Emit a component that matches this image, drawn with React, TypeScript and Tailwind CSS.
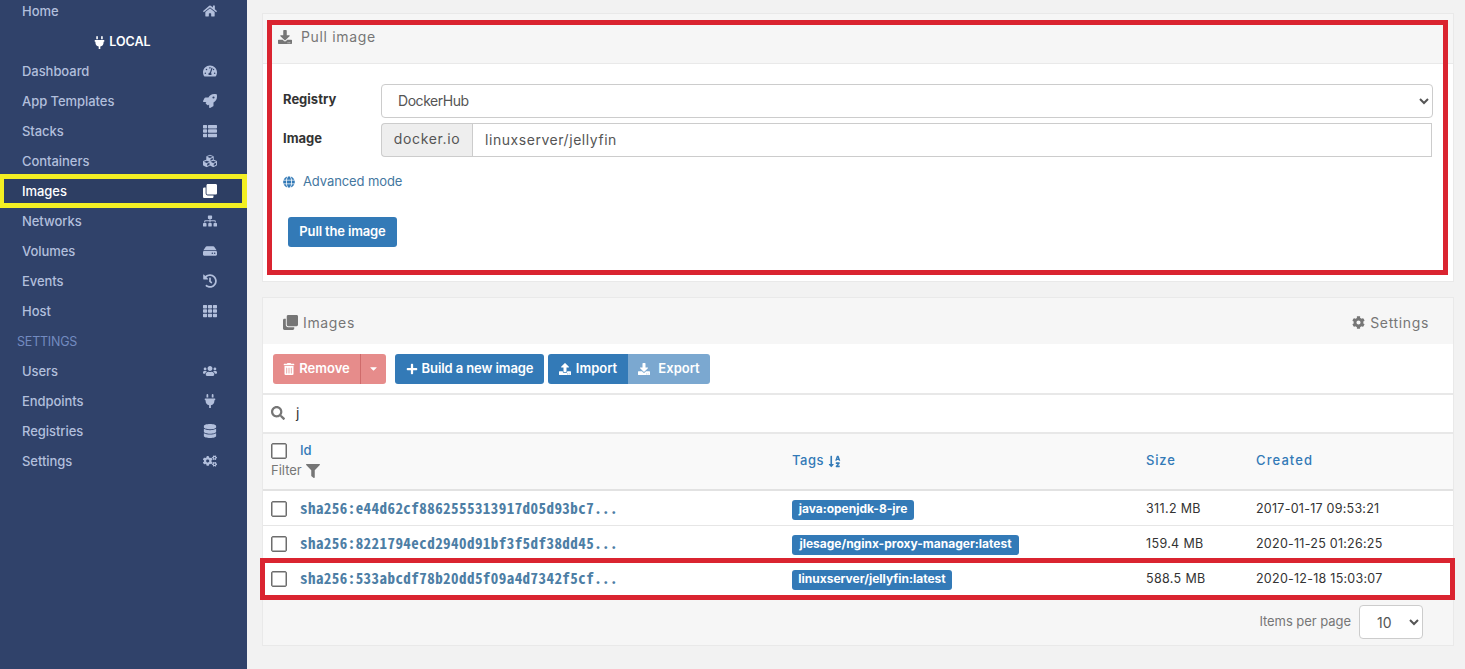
import type { ReactNode } from "react"
import type { IconType } from "react-icons"
import {
  FaCaretDown,
  FaClone,
  FaCog,
  FaCogs,
  FaCubes,
  FaDatabase,
  FaDownload,
  FaFilter,
  FaGlobe,
  FaHdd,
  FaHistory,
  FaHome,
  FaPlug,
  FaPlus,
  FaRocket,
  FaSearch,
  FaSitemap,
  FaSortAlphaDown,
  FaTachometerAlt,
  FaTh,
  FaThList,
  FaTrashAlt,
  FaUpload,
  FaUsers,
} from "react-icons/fa"

interface NavItem {
  label: string
  icon: IconType
  active?: boolean
}

const localNav: NavItem[] = [
  { label: "Dashboard", icon: FaTachometerAlt },
  { label: "App Templates", icon: FaRocket },
  { label: "Stacks", icon: FaThList },
  { label: "Containers", icon: FaCubes },
  { label: "Images", icon: FaClone, active: true },
  { label: "Networks", icon: FaSitemap },
  { label: "Volumes", icon: FaHdd },
  { label: "Events", icon: FaHistory },
  { label: "Host", icon: FaTh },
]

const settingsNav: NavItem[] = [
  { label: "Users", icon: FaUsers },
  { label: "Endpoints", icon: FaPlug },
  { label: "Registries", icon: FaDatabase },
  { label: "Settings", icon: FaCogs },
]

const images = [
  { id: "sha256:e44d62cf8862555313917d05d93bc7...", tag: "java:openjdk-8-jre", size: "311.2 MB", created: "2017-01-17 09:53:21", tagWidth: "w-[122px]" },
  { id: "sha256:8221794ecd2940d91bf3f5df38dd45...", tag: "jlesage/nginx-proxy-manager:latest", size: "159.4 MB", created: "2020-11-25 01:26:25", tagWidth: "w-[227px]" },
  { id: "sha256:533abcdf78b20dd5f09a4d7342f5cf...", tag: "linuxserver/jellyfin:latest", size: "588.5 MB", created: "2020-12-18 15:03:07", tagWidth: "w-[160px]", marked: true },
]

function NavRow({ label, icon: Icon, active }: NavItem) {
  return (
    <div className={`relative flex h-[30px] items-center pl-[22px] text-[13px] font-medium ${active ? "bg-[#2d3e63] text-white" : "text-[#b2bfdc]"}`}>
      <span className="w-[178px] pt-[2px] tracking-[-0.05px]">{label}</span>
      <span className="flex w-5 justify-center pb-px">
        <Icon size={14} />
      </span>
      {active && <div className="absolute inset-x-0 -inset-y-[2px] border-[5px] border-l-4 border-[#f3ef23]" />}
    </div>
  )
}

function Checkbox() {
  return <input type="checkbox" className="block h-4 w-4 shrink-0 appearance-none rounded-[2px] border-[1.5px] border-[#6d6d6d] bg-white ring-[0.5px] ring-inset ring-[#6d6d6d]" />
}

function Button({ className, children }: { className: string; children: ReactNode }) {
  return (
    <button className={`flex h-[30px] items-center justify-center whitespace-nowrap text-[13px] font-semibold text-white ${className}`}>
      {children}
    </button>
  )
}

function Sidebar() {
  return (
    <aside className="h-full w-[247px] shrink-0 bg-[#30426a]">
      <div className="-mt-1">
        <NavRow label="Home" icon={FaHome} />
        <div className="flex h-[30px] items-center justify-center gap-[3px] pr-[3px] pt-[2px] text-[12.5px] font-semibold text-white">
          <FaPlug size={13} />
          LOCAL
        </div>
        {localNav.map((item) => (
          <NavRow key={item.label} {...item} />
        ))}
        <div className="flex h-[30px] items-center pl-[17px] pt-[2px] text-[12.5px] tracking-[-0.2px] text-[#738bc0]">SETTINGS</div>
        {settingsNav.map((item) => (
          <NavRow key={item.label} {...item} />
        ))}
      </div>
    </aside>
  )
}

function PullImage() {
  return (
    <section className="relative h-[269px] border border-[#e9e9e9] bg-white">
      <div className="flex h-[50px] items-center border-b border-[#e9e9e9] bg-[#f6f6f6] pb-1 pl-[15px] text-[14px] text-[#767676]">
        <FaDownload size={14} />
        <span className="ml-[9px] tracking-[0.65px]">Pull image</span>
      </div>
      <div className="pl-5 pr-5 pt-5 text-[#333]">
        <div className="flex h-[34px]">
          <label className="w-[98px] pt-[6px] text-[13px] font-bold leading-[18px]">Registry</label>
          <select className="h-[34px] flex-1 rounded border border-[#ccc] bg-white px-3 pb-px text-[14px] tracking-[-0.45px] text-[#555]">
            <option>DockerHub</option>
          </select>
        </div>
        <div className="mt-[5px] flex h-[34px] pr-px">
          <label className="w-[98px] pt-[6px] text-[13px] font-bold leading-[18px]">Image</label>
          <span className="flex w-[91px] items-center justify-center rounded-l border border-r-0 border-[#ccc] bg-[#eee] pb-[3px] text-[14px] tracking-[0.65px] text-[#555]">docker.io</span>
          <input className="h-[34px] flex-1 border border-[#ccc] px-3 pb-[2px] text-[14px] tracking-[0.55px] text-[#555]" defaultValue="linuxserver/jellyfin" />
        </div>
        <a className="mt-[15px] flex h-5 items-center text-[13px] text-[#337ab7]">
          <FaGlobe size={12} />
          <span className="ml-2 tracking-[-0.1px] text-[#44779f]">Advanced mode</span>
        </a>
        <Button className="ml-[5px] mt-[25px] w-[109px] rounded-[3px] bg-[#337ab7] tracking-[-0.15px]">Pull the image</Button>
      </div>
      {/* callout around the form */}
      <div className="pointer-events-none absolute bottom-[6px] left-1 right-[5px] top-[6px] border-[5px] border-[#da2430]" />
    </section>
  )
}

function ImagesTable() {
  return (
    <section className="mt-[15px] h-[349px] border border-[#e9e9e9] bg-white">
      <div className="flex h-[46px] items-center justify-between bg-[#f6f6f6] pl-5 pr-6 pt-[2px] text-[14px] text-[#767676]">
        <span className="flex items-center gap-[5px]">
          <FaClone size={15} />
          <span className="tracking-[0.65px]">Images</span>
        </span>
        <span className="flex items-center gap-[5px]">
          <FaCog size={13} />
          <span className="tracking-[0.65px]">Settings</span>
        </span>
      </div>
      <div className="flex h-[51px] items-center border-b-2 border-[#e8e8e8] pl-[10px]">
        <Button className="w-[88px] gap-1 rounded-l-[3px] border-r border-[#cf6b6b] bg-[#e68c8b]">
          <FaTrashAlt size={12} />
          Remove
        </Button>
        <Button className="w-[25px] rounded-r-[3px] bg-[#e68c8b]">
          <FaCaretDown size={11} />
        </Button>
        <Button className="ml-[9px] w-[149px] gap-1 rounded-[3px] bg-[#337ab7] tracking-[-0.1px]">
          <FaPlus size={12} />
          Build a new image
        </Button>
        <Button className="ml-1 w-20 gap-[5px] rounded-l-[3px] bg-[#337ab7]">
          <FaUpload size={12} />
          Import
        </Button>
        <Button className="w-[82px] gap-2 rounded-r-[3px] bg-[#7ba8d0]">
          <FaDownload size={12} />
          Export
        </Button>
      </div>
      <div className="flex h-[39px] items-center gap-[11px] border-b-2 border-[#e8e8e8] pb-[2px] pl-2 text-[14px] text-[#333]">
        <FaSearch size={14} className="text-[#767676]" />
        j
      </div>
      <div className="flex h-[57px] items-center border-b-2 border-[#e2e2e2] bg-[#f9f9f9] pb-px text-[13px] font-medium text-[#337ab7]">
        <div className="w-[529px] pl-2">
          <div className="flex h-5 items-center gap-[13px]">
            <Checkbox />
            Id
          </div>
          <div className="flex h-5 items-center gap-1 font-normal text-[#767676]">
            Filter
            <FaFilter size={14} />
          </div>
        </div>
        <div className="flex w-[354px] items-center gap-1 tracking-[0.5px]">
          Tags
          <FaSortAlphaDown size={13} />
        </div>
        <div className="w-[110px] tracking-[0.8px]">Size</div>
        <div className="tracking-[1.1px]">Created</div>
      </div>
      {images.map((img) => (
        <div key={img.id} className="relative flex h-[35px] items-center border-b border-[#e6e6e6] pt-px text-[12.5px] text-[#333]">
          <div className="flex w-[529px] items-center gap-[13px] pl-2">
            <Checkbox />
            <span className="pb-[2px] font-['Noto_Sans_Mono_CJK_SC','Liberation_Mono',monospace] text-[15px] font-bold leading-5 tracking-[0.45px] text-[#4d7ea5]">{img.id}</span>
          </div>
          <div className="w-[354px] pt-[2px]">
            <span className={`flex h-5 items-center justify-center whitespace-nowrap rounded-[3px] bg-[#337ab7] pb-0.5 text-[12px] font-bold text-white ${img.tagWidth}`}>{img.tag}</span>
          </div>
          <div className="w-[110px] pt-px tracking-[0.35px]">{img.size}</div>
          <div className="pt-px tracking-[0.25px]">{img.created}</div>
          {img.marked && <div className="absolute -bottom-[5px] -left-[3px] -right-[2px] -top-[3px] border-[5px] border-[#da2430]" />}
        </div>
      ))}
      <div className="flex h-[49px] items-center justify-end bg-[#f6f6f6] pr-[30px] pt-[3px] text-[13px] text-[#767676]">
        <span className="mr-2 pb-px tracking-[-0.05px]">Items per page</span>
        <select className="h-[34px] w-16 rounded border border-[#ccc] bg-white px-3 pl-[13px] text-[14px] text-[#555]">
          <option>10</option>
        </select>
      </div>
    </section>
  )
}

export default function App() {
  return (
    <div className="flex h-[669px] w-[1465px] overflow-hidden bg-[#f2f2f2] font-['Inter','Liberation_Sans',sans-serif]">
      <Sidebar />
      <main className="flex-1 pl-[15px] pr-[11px] pt-[13px]">
        <PullImage />
        <ImagesTable />
      </main>
    </div>
  )
}
